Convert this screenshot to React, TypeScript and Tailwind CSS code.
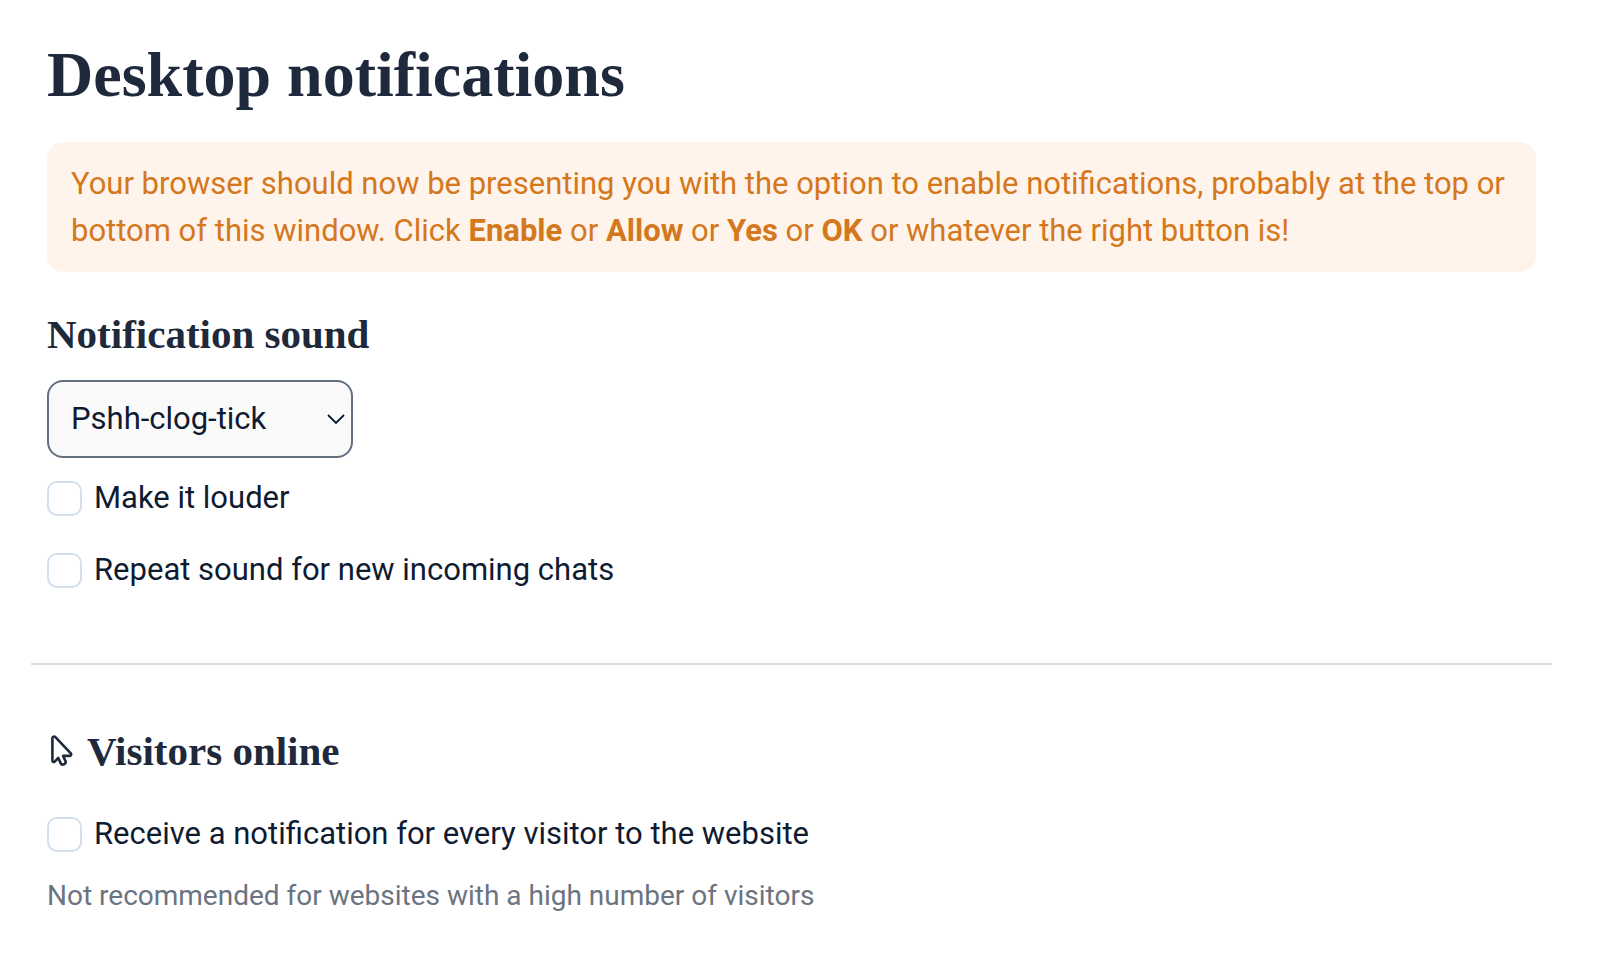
import React, { FC, useState } from "react";

type CheckOptionProps = {
  id: string;
  label: string;
  checked: boolean;
  onChange: (checked: boolean) => void;
};

const CheckOption: FC<CheckOptionProps> = ({
  id,
  label,
  checked,
  onChange,
}) => (
  <div className="flex items-center gap-3">
    <input
      type="checkbox"
      id={id}
      checked={checked}
      onChange={(e) => onChange(e.target.checked)}
      className="size-[35px] shrink-0 appearance-none rounded-[10px] border-2 border-[#d3dfed] bg-white checked:border-slate-600 checked:bg-slate-600"
    />
    <label htmlFor={id}>{label}</label>
  </div>
);

const App: FC = () => {
  const [sound, setSound] = useState<string>("Pshh-clog-tick");
  const [louder, setLouder] = useState<boolean>(false);
  const [repeat, setRepeat] = useState<boolean>(false);
  const [everyVisitor, setEveryVisitor] = useState<boolean>(false);

  return (
    <main className="min-h-screen bg-white pt-[39px] pr-12 pb-12 pl-[31px] font-['Roboto',sans-serif] text-[31px] leading-[46px] text-[#0f1b31]">
      <section className="px-4">
        <h1 className="font-['Liberation_Serif',serif] text-[64px] leading-[72px] font-bold text-[#1e293b]">
          Desktop notifications
        </h1>

        <p className="mt-[31px] rounded-2xl bg-[#fef4eb] px-6 py-[18px] leading-[47px] text-[#d5771c]">
          Your browser should now be presenting you with the option to enable
          notifications, probably at the top or bottom of this window. Click{" "}
          <strong>Enable</strong> or <strong>Allow</strong> or{" "}
          <strong>Yes</strong> or <strong>OK</strong> or whatever the right
          button is!
        </p>

        <h2 className="mt-[38px] font-['Liberation_Serif',serif] text-[41px] leading-[48px] font-bold text-[#1e293b]">
          <label htmlFor="sound">Notification sound</label>
        </h2>
        <div className="mt-[22px] grid w-[306px]">
          <select
            id="sound"
            value={sound}
            onChange={(e) => setSound(e.target.value)}
            className="col-start-1 row-start-1 h-[78px] w-full appearance-none rounded-2xl border-2 border-[#64707f] bg-[#fafafa] pr-10 pl-[22px]"
          >
            <option>Pshh-clog-tick</option>
            <option>None</option>
          </select>
          <svg
            viewBox="0 0 18 10"
            className="pointer-events-none col-start-1 row-start-1 mr-2 h-[10px] w-[18px] self-center justify-self-end"
            fill="none"
            stroke="#0f1b31"
            strokeWidth="1.8"
          >
            <path d="M1 1l8 8 8-8" />
          </svg>
        </div>

        <div className="mt-[17px] flex flex-col gap-[26px]">
          <CheckOption
            id="louder"
            label="Make it louder"
            checked={louder}
            onChange={setLouder}
          />
          <CheckOption
            id="repeat"
            label="Repeat sound for new incoming chats"
            checked={repeat}
            onChange={setRepeat}
          />
        </div>
      </section>

      <hr className="mt-[70px] border-t-2 border-[#d9dfe7]" />

      <section className="px-4 pt-[62px]">
        <h2 className="flex items-center gap-3 font-['Liberation_Serif',serif] text-[41px] leading-[48px] font-bold text-[#1e293b]">
          <svg
            viewBox="0 0 28 36"
            className="h-9 w-7"
            fill="none"
            stroke="currentColor"
            strokeWidth="2.6"
            strokeLinejoin="round"
            strokeLinecap="round"
          >
            <path d="M5.4 5.2v22.300c0 1.500 1.600 2 2.600.9l3.200-3.500 2.300 5c.7 1.500 2.200 2 3.600 1.400 1.400-.7 1.900-2.200 1.200-3.600l-2.200-4.800h6.300c1.700 0 2.300-1.600 1.200-2.800L8.400 4.100c-1.100-1.200-3-.5-3 1.100z" />
          </svg>
          Visitors online
        </h2>
        <div className="mt-9">
          <CheckOption
            id="every-visitor"
            label="Receive a notification for every visitor to the website"
            checked={everyVisitor}
            onChange={setEveryVisitor}
          />
        </div>
        <p className="mt-4 text-[28px] text-[#6b7480]">
          Not recommended for websites with a high number of visitors
        </p>
      </section>
    </main>
  );
};

export default App;
